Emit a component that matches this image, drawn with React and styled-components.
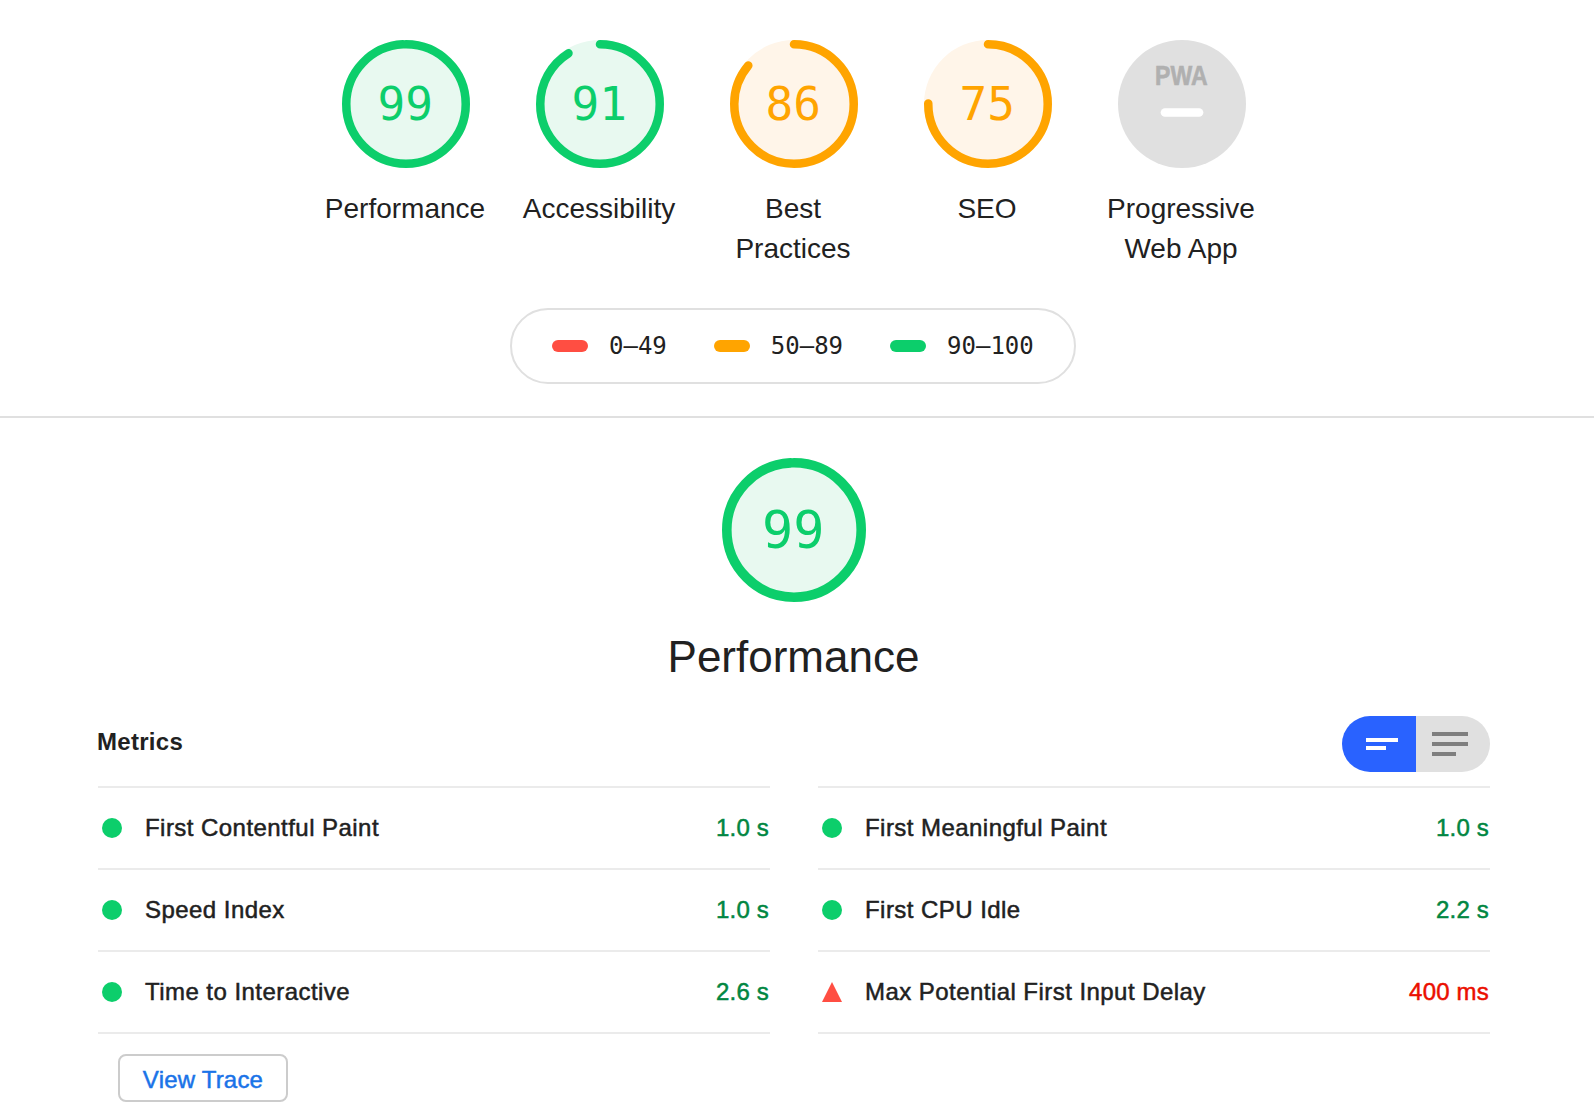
import React from 'react';
import styled, { createGlobalStyle } from 'styled-components';

const GlobalStyle = createGlobalStyle`
  body {
    margin: 0;
    background: #fff;
    color: #212121;
    font-family: 'Liberation Sans', Arial, sans-serif;
  }

  * {
    box-sizing: border-box;
  }
`;

const MONO = "'DejaVu Sans Mono', monospace";

const palette = {
  pass: { main: '#0cce6b', fill: '#e8f9f0', text: '#018642' },
  average: { main: '#ffa400', fill: '#fff5e9', text: '#d04900' },
  fail: { main: '#ff4e42', fill: '#ffedec', text: '#eb0f00' },
};

const rate = (score) => {
  if (score >= 90) return 'pass';
  return score >= 50 ? 'average' : 'fail';
};

const Report = styled.div`
  width: 100%;
  height: 1120px;
  overflow: hidden;
`;

const ScoresHeader = styled.header`
  display: flex;
  flex-direction: column;
  align-items: center;
  height: 418px;
  padding: 40px 6px 0 0;
  border-bottom: 2px solid #e0e0e0;
`;

const Scores = styled.div`
  display: flex;
  height: 268px;
`;

const ScoreItem = styled.div`
  display: flex;
  flex-direction: column;
  align-items: center;
  width: 194px;
`;

const ScoreLabel = styled.div`
  width: 170px;
  margin-top: 21px;
  padding-right: 2px;
  font-size: 28px;
  line-height: 40px;
  text-align: center;
`;

const GaugeSvg = styled.svg`
  display: block;
  flex: none;
  width: ${({ $size }) => $size}px;
  height: ${({ $size }) => $size}px;
`;

const GaugeNumber = styled.text`
  font-family: ${MONO};
  font-size: 43.2px;
  text-anchor: middle;
`;

const PwaText = styled.text`
  font-family: 'Liberation Sans', Arial, sans-serif;
  font-size: 12.8px;
  font-weight: 700;
  fill: #b0b0b0;
  stroke: #b0b0b0;
  stroke-width: 0.3px;
`;

const Scale = styled.div`
  display: flex;
  align-items: center;
  gap: 47px;
  width: 566px;
  height: 76px;
  margin-right: 2px;
  padding-left: 40px;
  border: 2px solid #e0e0e0;
  border-radius: 38px;
`;

const ScaleRange = styled.div`
  display: flex;
  align-items: center;
  gap: 21px;
  font-family: ${MONO};
  font-size: 24px;
  line-height: 32px;

  &::before {
    content: '';
    width: 36px;
    height: 12px;
    border-radius: 6px;
    background: ${({ $rating }) => palette[$rating].main};
  }
`;

const Category = styled.main`
  padding: 40px 104px 0 98px;
`;

const CategoryHeader = styled.div`
  display: flex;
  flex-direction: column;
  align-items: center;
`;

const CategoryTitle = styled.h1`
  margin: 25px 0 0;
  padding-right: 1px;
  font-size: 44px;
  font-weight: 400;
  line-height: 60px;
`;

const MetricsHeader = styled.div`
  display: flex;
  justify-content: space-between;
  height: 70px;
  margin-top: 29px;
`;

const MetricsTitle = styled.h2`
  margin: 10px 0 0 -1px;
  font-size: 24px;
  line-height: 32px;
  letter-spacing: 0.3px;
`;

const Toggle = styled.div`
  display: flex;
  width: 148px;
  height: 56px;
  border-radius: 28px;
  overflow: hidden;
`;

const ToggleHalf = styled.div`
  display: flex;
  flex-direction: column;
  justify-content: center;
  gap: ${({ $active }) => ($active ? 4 : 6)}px;
  flex: none;
  width: 74px;
  padding-left: ${({ $active }) => ($active ? 24 : 16)}px;
  background: ${({ $active }) => ($active ? '#2962ff' : '#e0e0e0')};
  color: ${({ $active }) => ($active ? '#fff' : '#7f7f7f')};
`;

const ToggleLine = styled.span`
  width: ${({ $width }) => $width}px;
  height: 4px;
  background: currentColor;
`;

const Columns = styled.div`
  display: grid;
  grid-template-columns: 1fr 1fr;
  column-gap: 48px;
`;

const Column = styled.div`
  border-bottom: 2px solid #ebebeb;
`;

const MetricRow = styled.div`
  display: flex;
  align-items: center;
  height: 82px;
  padding-left: 4px;
  border-top: 2px solid #ebebeb;
  font-size: 24px;
  line-height: 32px;
  letter-spacing: 0.45px;
  -webkit-text-stroke: 0.5px currentColor;
`;

const MetricIcon = styled.span`
  width: 20px;
  height: 20px;
  margin-right: 23px;
  background: ${({ $rating }) => palette[$rating].main};
  border-radius: ${({ $rating }) => ($rating === 'fail' ? 0 : '50%')};
  clip-path: ${({ $rating }) =>
    $rating === 'fail' ? 'polygon(50% 0, 100% 100%, 0 100%)' : 'none'};
`;

const MetricValue = styled.span`
  margin-left: auto;
  padding-right: 1px;
  letter-spacing: 0.2px;
  color: ${({ $rating }) => palette[$rating].text};
`;

const TraceButton = styled.button`
  display: block;
  width: 170px;
  height: 48px;
  margin: 20px 0 0 20px;
  padding: 4px 0 0;
  border: 2px solid #ccc;
  border-radius: 8px;
  background: #fff;
  color: #1a73e8;
  font-family: inherit;
  font-size: 24px;
  line-height: 32px;
  letter-spacing: 0.2px;
  -webkit-text-stroke: 0.5px currentColor;
`;

const ARC_LENGTH = 2 * Math.PI * 56;

const Gauge = ({ score, size }) => {
  const { main, fill } = palette[rate(score)];

  return (
    <GaugeSvg $size={size} viewBox="0 0 120 120">
      <circle cx="60" cy="60" r="60" fill={fill} />
      <circle
        cx="60"
        cy="60"
        r="56"
        fill="none"
        stroke={main}
        strokeWidth="8"
        strokeLinecap="round"
        strokeDasharray={`${(score / 100) * ARC_LENGTH} ${ARC_LENGTH}`}
        transform="rotate(-90 60 60)"
      />
      <GaugeNumber x="59.3" y="75" fill={main}>
        {score}
      </GaugeNumber>
    </GaugeSvg>
  );
};

const PwaGauge = () => (
  <GaugeSvg $size={128} viewBox="0 0 60 60">
    <circle cx="30" cy="30" r="30" fill="#e0e0e0" />
    <PwaText x="17.4" y="21.1" textLength="24.6" lengthAdjust="spacingAndGlyphs">
      PWA
    </PwaText>
    <rect x="20" y="32" width="20" height="4" rx="2" fill="#fff" />
  </GaugeSvg>
);

const Metric = ({ title, value, rating = 'pass' }) => (
  <MetricRow>
    <MetricIcon $rating={rating} />
    <span>{title}</span>
    <MetricValue $rating={rating}>{value}</MetricValue>
  </MetricRow>
);

const scores = [
  { label: 'Performance', score: 99 },
  { label: 'Accessibility', score: 91 },
  { label: 'Best Practices', score: 86 },
  { label: 'SEO', score: 75 },
];

const App = () => {
  return (
    <Report>
      <GlobalStyle />
      <ScoresHeader>
        <Scores>
          {scores.map(({ label, score }) => (
            <ScoreItem key={label}>
              <Gauge score={score} size={128} />
              <ScoreLabel>{label}</ScoreLabel>
            </ScoreItem>
          ))}
          <ScoreItem>
            <PwaGauge />
            <ScoreLabel>Progressive Web App</ScoreLabel>
          </ScoreItem>
        </Scores>
        <Scale>
          <ScaleRange $rating="fail">0–49</ScaleRange>
          <ScaleRange $rating="average">50–89</ScaleRange>
          <ScaleRange $rating="pass">90–100</ScaleRange>
        </Scale>
      </ScoresHeader>
      <Category>
        <CategoryHeader>
          <Gauge score={99} size={144} />
          <CategoryTitle>Performance</CategoryTitle>
        </CategoryHeader>
        <MetricsHeader>
          <MetricsTitle>Metrics</MetricsTitle>
          <Toggle>
            <ToggleHalf $active>
              <ToggleLine $width={32} />
              <ToggleLine $width={20} />
            </ToggleHalf>
            <ToggleHalf>
              <ToggleLine $width={36} />
              <ToggleLine $width={36} />
              <ToggleLine $width={24} />
            </ToggleHalf>
          </Toggle>
        </MetricsHeader>
        <Columns>
          <Column>
            <Metric title="First Contentful Paint" value="1.0 s" />
            <Metric title="Speed Index" value="1.0 s" />
            <Metric title="Time to Interactive" value="2.6 s" />
          </Column>
          <Column>
            <Metric title="First Meaningful Paint" value="1.0 s" />
            <Metric title="First CPU Idle" value="2.2 s" />
            <Metric
              title="Max Potential First Input Delay"
              value="400 ms"
              rating="fail"
            />
          </Column>
        </Columns>
        <TraceButton>View Trace</TraceButton>
      </Category>
    </Report>
  );
};

export default App;
